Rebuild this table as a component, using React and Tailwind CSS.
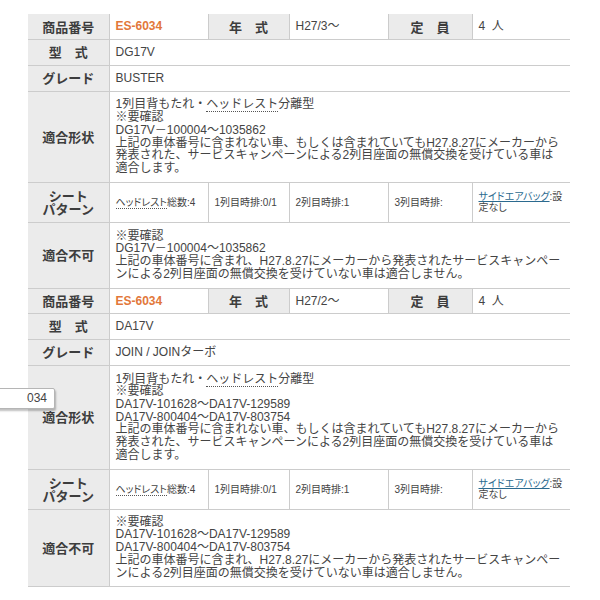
const blocks = [
  {
    no: "ES-6034",
    year: "H27/3〜",
    model: "DG17V",
    grade: "BUSTER",
    fitH: "h-[91px]",
    fit: [
      "※要確認",
      "DG17V－100004〜1035862",
      "上記の車体番号に含まれない車、もしくは含まれていてもH27.8.27にメーカーから",
      "発表された、サービスキャンペーンによる2列目座面の無償交換を受けている車は",
      "適合します。",
    ],
    ngH: "h-[66px]",
    ng: [
      "※要確認",
      "DG17V－100004〜1035862",
      "上記の車体番号に含まれ、H27.8.27にメーカーから発表されたサービスキャンペー",
      "ンによる2列目座面の無償交換を受けていない車は適合しません。",
    ],
  },
  {
    no: "ES-6034",
    year: "H27/2〜",
    model: "DA17V",
    grade: "JOIN / JOINターボ",
    fitH: "h-[104px]",
    fit: [
      "※要確認",
      "DA17V-101628〜DA17V-129589",
      "DA17V-800404〜DA17V-803754",
      "上記の車体番号に含まれない車、もしくは含まれていてもH27.8.27にメーカーから",
      "発表された、サービスキャンペーンによる2列目座面の無償交換を受けている車は",
      "適合します。",
    ],
    ngH: "h-[77px]",
    ng: [
      "※要確認",
      "DA17V-101628〜DA17V-129589",
      "DA17V-800404〜DA17V-803754",
      "上記の車体番号に含まれ、H27.8.27にメーカーから発表されたサービスキャンペー",
      "ンによる2列目座面の無償交換を受けていない車は適合しません。",
    ],
  },
];

const th =
  "bg-[#ebebeb] text-[#3d3d3d] font-bold text-[13px] text-center align-middle border-b border-r border-[#cccccc] font-['Noto_Sans_CJK_JP',sans-serif] p-0";
const td =
  "text-[#444444] text-[12px] text-left align-middle border-b border-[#cccccc] pl-[6px] pr-0 whitespace-nowrap";
const seat =
  "text-[#444444] text-[10px] leading-[11px] text-left align-middle border-b border-r border-[#cccccc] pl-[6px] whitespace-nowrap [font-feature-settings:'palt']";

function Block({ b }) {
  return (
    <>
      <tr className="h-[25px]">
        <th className={th}>商品番号</th>
        <td className={`${td} border-r`}>
          <span className="text-[#e2773a] font-bold">{b.no}</span>
        </td>
        <th className={th}>年　式</th>
        <td className={`${td} border-r`}>{b.year}</td>
        <th className={th}>定　員</th>
        <td className={td}>4&nbsp;&nbsp;人</td>
      </tr>
      <tr className="h-[26px]">
        <th className={th}>型　式</th>
        <td className={td} colSpan={5}>{b.model}</td>
      </tr>
      <tr className="h-[26px]">
        <th className={th}>グレード</th>
        <td className={td} colSpan={5}>{b.grade}</td>
      </tr>
      <tr className={b.fitH}>
        <th className={th}>適合形状</th>
        <td className={`${td} leading-[12.7px]`} colSpan={5}>
          <div>
            1列目背もたれ・
            <span className="border-b border-dotted border-[#555]">ヘッドレスト</span>
            分離型
          </div>
          {b.fit.map((l, i) => (
            <div key={i}>{l}</div>
          ))}
        </td>
      </tr>
      <tr className="h-[40px]">
        <th className={`${th} leading-[13px]`}>
          シート
          <br />
          パターン
        </th>
        <td className={seat}>
          <span className="border-b border-dotted border-[#555]">ヘッドレスト</span>総数:4
        </td>
        <td className={seat}>1列目時排:0/1</td>
        <td className={seat}>2列目時排:1</td>
        <td className={seat}>3列目時排:</td>
        <td className={`${seat} border-r-0`}>
          <span className="text-[#2b6a8f] underline">サイドエアバッグ</span>:設
          <br />
          定なし
        </td>
      </tr>
      <tr className={b.ngH}>
        <th className={th}>適合不可</th>
        <td className={`${td} leading-[12.7px]`} colSpan={5}>
          {b.ng.map((l, i) => (
            <div key={i}>{l}</div>
          ))}
        </td>
      </tr>
    </>
  );
}

export default function App() {
  return (
    <div className="relative w-[600px] h-[600px] bg-white pl-[28px] pt-[14px] font-['Liberation_Sans','Noto_Sans_CJK_JP',sans-serif]">
      <table className="table-fixed border-collapse w-[542px]">
        <colgroup>
          <col className="w-[81px]" />
          <col className="w-[99px]" />
          <col className="w-[81px]" />
          <col className="w-[99px]" />
          <col className="w-[84px]" />
          <col className="w-[98px]" />
        </colgroup>
        <tbody>
          {blocks.map((b, i) => (
            <Block key={i} b={b} />
          ))}
        </tbody>
      </table>

      {/* cut-off tooltip */}
      <div className="absolute left-[-6px] top-[388px] w-[61px] h-[21px] bg-white border border-[#b5b5b5] rounded-[2px] shadow-[1px_2px_2px_rgba(0,0,0,0.25)] text-[12px] text-[#444] leading-[19px] pl-[32px]">
        034
      </div>
    </div>
  );
}
